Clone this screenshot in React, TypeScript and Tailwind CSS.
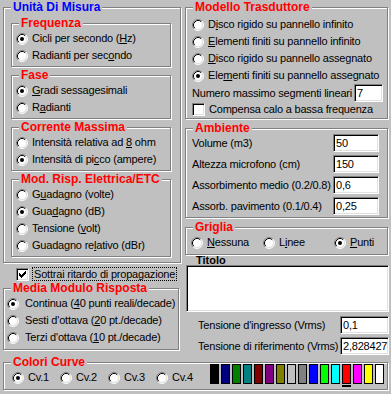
import type { ReactNode } from "react";

/* --- data --- */
const swatches = [
  "#000000",
  "#000080",
  "#008000",
  "#008080",
  "#800000",
  "#800080",
  "#808000",
  "#c0c0c0",
  "#808080",
  "#0000ff",
  "#00ff00",
  "#00ffff",
  "#ff0000",
  "#ff00ff",
  "#ffff00",
  "#ffffff",
];

function Radio({ checked }: { checked?: boolean }) {
  return (
    <svg width="12" height="12" viewBox="0 0 12 12" className="shrink-0">
      <circle cx="6" cy="6" r="5" fill="#fff" />
      <path d="M2.11 9.89 A5.5 5.5 0 0 1 9.89 2.11" fill="none" stroke="#808080" />
      <path d="M9.89 2.11 A5.5 5.5 0 0 1 2.11 9.89" fill="none" stroke="#fff" />
      <path d="M2.82 9.18 A4.5 4.5 0 0 1 9.18 2.82" fill="none" stroke="#000" />
      <path d="M9.18 2.82 A4.5 4.5 0 0 1 2.82 9.18" fill="none" stroke="#dfdfdf" />
      {checked && <circle cx="6" cy="6" r="2" fill="#000" />}
    </svg>
  );
}

function Check({ checked }: { checked?: boolean }) {
  return (
    <span className="w-[13px] h-[13px] shrink-0 bg-white border border-t-[#808080] border-l-[#808080] border-b-white border-r-white shadow-[inset_1px_1px_0_#000,inset_-1px_-1px_0_#dfdfdf] flex items-center justify-center">
      {checked && (
        <svg width="7" height="7" viewBox="0 0 7 7">
          <path
            d="M0 2h1v3h-1z M1 3h1v3h-1z M2 4h1v3h-1z M3 3h1v3h-1z M4 2h1v3h-1z M5 1h1v3h-1z M6 0h1v3h-1z"
            fill="#000"
          />
        </svg>
      )}
    </span>
  );
}

function Field({ value, className }: { value: string; className: string }) {
  return (
    <div
      className={`bg-white border border-t-[#808080] border-l-[#808080] border-b-white border-r-white shadow-[inset_1px_1px_0_#000,inset_-1px_-1px_0_#dfdfdf] pl-[2px] flex items-center overflow-hidden whitespace-nowrap ${className}`}
    >
      {value}
    </div>
  );
}

function Group({
  title,
  blue,
  className,
  children,
}: {
  title: string;
  blue?: boolean;
  className: string;
  children: ReactNode;
}) {
  return (
    <fieldset
      className={`border border-[#808080] shadow-[inset_1px_1px_0_#fff,1px_1px_0_#fff] ${className}`}
    >
      <legend
        className={`ml-[7px] px-[2px] bg-[#c0c0c0] text-[12px] leading-[14px] font-bold tracking-normal ${
          blue ? "text-[#0000ff]" : "text-[#ff0000]"
        }`}
      >
        {title}
      </legend>
      {children}
    </fieldset>
  );
}

function Opt({
  checked,
  children,
  className = "",
}: {
  checked?: boolean;
  children: ReactNode;
  className?: string;
}) {
  return (
    <div className={`flex items-center gap-[4px] h-[17px] whitespace-nowrap ${className}`}>
      <Radio checked={checked} />
      <span>{children}</span>
    </div>
  );
}

const U = ({ children }: { children: ReactNode }) => <span className="underline">{children}</span>;

export default function App() {
  return (
    <div className="w-[391px] h-[394px] overflow-hidden bg-[#c0c0c0] pl-[3px] font-['Liberation_Sans',Arial,sans-serif] text-black text-[11px] leading-[13px] tracking-[-0.2px]">
      <div className="flex gap-[4px]">
        {/* left column */}
        <div className="w-[178px] flex flex-col">
          <Group title="Unità Di Misura" blue className="w-[178px] h-[263px]">
            <div className="pl-[7px] pr-[9px] pt-[2px] flex flex-col gap-[1px]">
              <Group title="Frequenza" className="h-[51px]">
                <div className="pl-[4px]">
                  <Opt checked>
                    Cicli per secondo (<U>H</U>z)
                  </Opt>
                  <Opt>
                    Radianti per sec<U>o</U>ndo
                  </Opt>
                </div>
              </Group>
              <Group title="Fase" className="h-[51px]">
                <div className="pl-[4px]">
                  <Opt checked>
                    <U>G</U>radi sessagesimali
                  </Opt>
                  <Opt>
                    R<U>a</U>dianti
                  </Opt>
                </div>
              </Group>
              <Group title="Corrente Massima" className="h-[51px]">
                <div className="pl-[4px]">
                  <Opt>
                    Intensità relativa ad <U>8</U> ohm
                  </Opt>
                  <Opt checked>
                    Intensità di pi<U>c</U>co (ampere)
                  </Opt>
                </div>
              </Group>
              <Group title="Mod. Risp. Elettrica/ETC" className="h-[85px]">
                <div className="pl-[4px]">
                  <Opt>
                    G<U>u</U>adagno (volte)
                  </Opt>
                  <Opt checked>
                    Gua<U>d</U>agno (dB)
                  </Opt>
                  <Opt>
                    Tensione (<U>v</U>olt)
                  </Opt>
                  <Opt>
                    Guadagno re<U>l</U>ativo (dBr)
                  </Opt>
                </div>
              </Group>
            </div>
          </Group>

          <div className="mt-[4px] h-[14px] pl-[13px] flex items-center gap-[3px] whitespace-nowrap">
            <Check checked />
            <span className="border border-dotted border-black px-[1px] leading-[12px]">
              Sottrai ritardo di propagazione
            </span>
          </div>

          <Group title="Media Modulo Risposta" className="w-[176px] h-[69px]">
            <div className="pl-[3px]">
              <Opt checked className="gap-[6px]">
                Continua (<U>4</U>0 punti reali/decade)
              </Opt>
              <Opt className="gap-[6px]">
                Sesti d'ottava (<U>2</U>0 pt./decade)
              </Opt>
              <Opt className="gap-[6px]">
                Terzi d'ottava (<U>1</U>0 pt./decade)
              </Opt>
            </div>
          </Group>
        </div>

        {/* right column */}
        <div className="w-[204px] flex flex-col">
          <Group title="Modello Trasduttore" className="w-[203px] h-[119px]">
            <div className="pl-[6px] pr-[4px] pt-[2px]">
              <Opt>
                D<U>i</U>sco rigido su pannello infinito
              </Opt>
              <Opt>
                <U>E</U>lementi finiti su pannello infinito
              </Opt>
              <Opt>
                <U>D</U>isco rigido su pannello assegnato
              </Opt>
              <Opt checked>
                Ele<U>m</U>enti finiti su pannello assegnato
              </Opt>
              <div className="flex items-center h-[18px] whitespace-nowrap">
                <span>Numero massimo segmenti lineari</span>
                <Field value="7" className="ml-auto w-[29px] h-[18px]" />
              </div>
              <div className="flex items-center gap-[4px] h-[15px] whitespace-nowrap">
                <Check />
                <span>Compensa calo a bassa frequenza</span>
              </div>
            </div>
          </Group>

          <Group title="Ambiente" className="mt-[2px] w-[203px] h-[97px]">
            <div className="pl-[6px] -mt-[1px] grid grid-cols-[141px_46px] gap-y-[3px] items-center whitespace-nowrap">
              <span>Volume (m3)</span>
              <Field value="50" className="h-[18px]" />
              <span>Altezza microfono (cm)</span>
              <Field value="150" className="h-[18px]" />
              <span>Assorbimento medio (0.2/0.8)</span>
              <Field value="0,6" className="h-[18px]" />
              <span>Assorb. pavimento (0.1/0.4)</span>
              <Field value="0,25" className="h-[18px]" />
            </div>
          </Group>

          <Group title="Griglia" className="mt-[2px] w-[203px] h-[35px]">
            <div className="pl-[5px] flex">
              <Opt className="w-[72px] h-[14px]">
                <U>N</U>essuna
              </Opt>
              <Opt className="w-[71px] h-[14px]">
                L<U>i</U>nee
              </Opt>
              <Opt checked className="h-[14px]">
                <U>P</U>unti
              </Opt>
            </div>
          </Group>

          <div className="h-[10px] pl-[11px] font-bold leading-[10px] tracking-normal">Titolo</div>
          <div className="ml-[1px] w-[203px] h-[47px] bg-white border border-t-[#808080] border-l-[#808080] border-b-white border-r-white shadow-[inset_1px_1px_0_#000,inset_-1px_-1px_0_#dfdfdf]" />

          <div className="mt-[4px] flex flex-col gap-[3px] pl-[13px] whitespace-nowrap">
            <div className="flex items-center">
              <span>Tensione d'ingresso (Vrms)</span>
              <Field value="0,1" className="ml-auto w-[49px] h-[18px]" />
            </div>
            <div className="flex items-center">
              <span>Tensione di riferimento (Vrms)</span>
              <Field value="2,828427" className="ml-auto w-[49px] h-[18px]" />
            </div>
          </div>
        </div>
      </div>

      {/* curve colours */}
      <Group title="Colori Curve" className="w-[385px] h-[35px]">
        <div className="pl-[8px] flex items-start">
          {["Cv.1", "Cv.2", "Cv.3", "Cv.4"].map((c, i) => (
            <Opt key={c} checked={i === 0} className="w-[48px] h-[16px]">
              {c}
            </Opt>
          ))}
          <div className="ml-[6px] -mt-[5px] flex gap-[2px]">
            {swatches.map((s, i) => (
              <div key={s} className="flex flex-col">
                <div className="w-[9px] h-[20px] border border-black" style={{ backgroundColor: s }} />
                {i === 12 && <div className="mt-[1px] h-[2px] bg-black" />}
              </div>
            ))}
          </div>
        </div>
      </Group>
    </div>
  );
}
